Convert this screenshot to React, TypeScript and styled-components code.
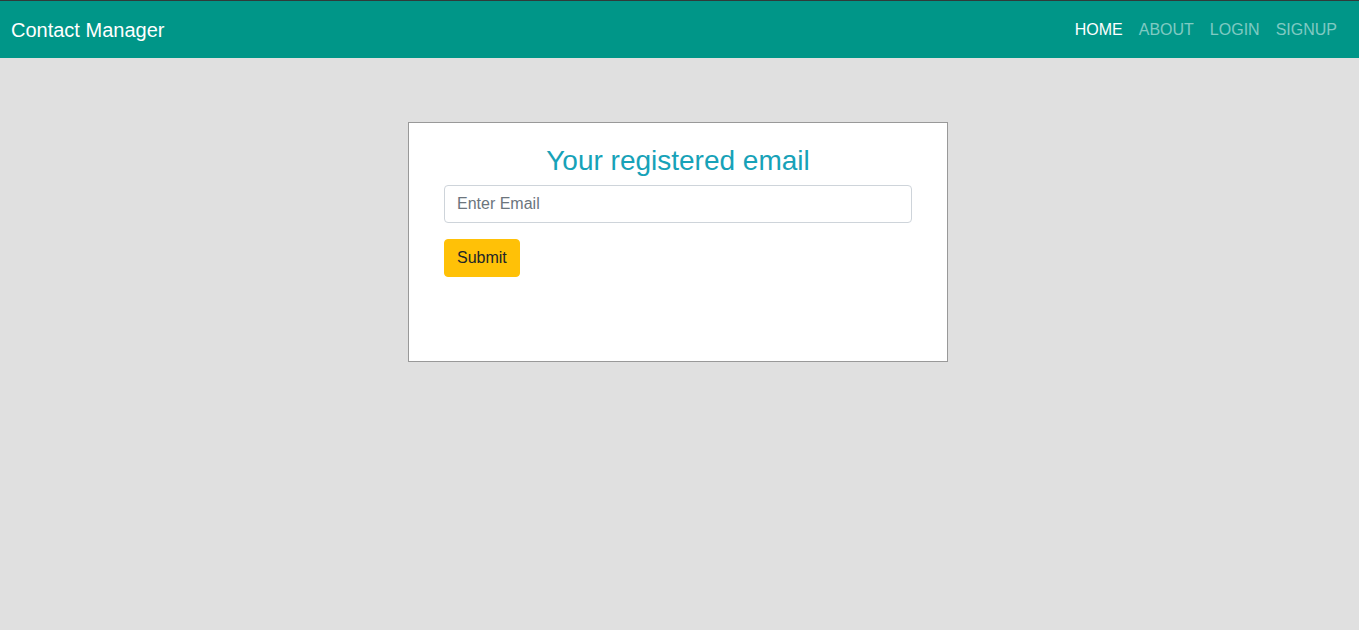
import styled, { createGlobalStyle } from 'styled-components';

const GlobalStyle = createGlobalStyle`
  * {
    box-sizing: border-box;
  }
  body {
    margin: 0;
    background: #e0e0e0;
    font-family: "Liberation Sans", Arial, sans-serif;
    color: #212529;
  }
`;

const NavBar = styled.nav`
  display: flex;
  justify-content: space-between;
  align-items: center;
  height: 58px;
  padding: 1px 14px 0 11px;
  background: #009688;
  border-top: 1px solid #2f3b3a;
`;

const Brand = styled.a`
  font-size: 20px;
  color: #fff;
  text-decoration: none;
  margin-top: 1px;
`;

const NavLinks = styled.ul`
  display: flex;
  list-style: none;
  margin: 0;
  padding: 0;
`;

const NavLink = styled.a<{ $active?: boolean }>`
  display: block;
  padding: 0 8px;
  font-size: 16px;
  text-transform: uppercase;
  text-decoration: none;
  color: ${props => (props.$active ? '#fff' : 'rgba(255, 255, 255, 0.5)')};
`;

const Main = styled.main`
  display: flex;
  justify-content: center;
  padding: 64px 3px 0 0;
`;

const Card = styled.div`
  width: 540px;
  height: 240px;
  background: #fff;
  border: 1px solid #999;
  padding: 21px 35px 0 35px;
`;

const Heading = styled.h2`
  margin: 0 0 7px;
  text-align: center;
  font-weight: 400;
  font-size: 28px;
  line-height: 1.2;
  color: #17a2b8;
`;

const EmailInput = styled.input`
  display: block;
  width: 100%;
  height: 38px;
  padding: 6px 12px;
  font-family: inherit;
  font-size: 16px;
  color: #495057;
  border: 1px solid #ced4da;
  border-radius: 4px;
  margin-bottom: 16px;

  &::placeholder {
    color: #6c757d;
  }
`;

const SubmitButton = styled.button`
  height: 38px;
  padding: 6px 12px;
  font-family: inherit;
  font-size: 16px;
  color: #212529;
  background: #ffc107;
  border: 1px solid #ffc107;
  border-radius: 4px;
  cursor: pointer;
`;

const links = ['Home', 'About', 'Login', 'Signup'];

const App = () => (
  <>
    <GlobalStyle />
    <NavBar>
      <Brand href="#">Contact Manager</Brand>
      <NavLinks>
        {links.map((l, i) => (
          <li key={l}>
            <NavLink href="#" $active={i === 0}>{l}</NavLink>
          </li>
        ))}
      </NavLinks>
    </NavBar>
    <Main>
      <Card>
        <form onSubmit={e => e.preventDefault()}>
          <Heading>Your registered email</Heading>
          <EmailInput type="email" placeholder="Enter Email" />
          <SubmitButton type="submit">Submit</SubmitButton>
        </form>
      </Card>
    </Main>
  </>
);

export default App;
